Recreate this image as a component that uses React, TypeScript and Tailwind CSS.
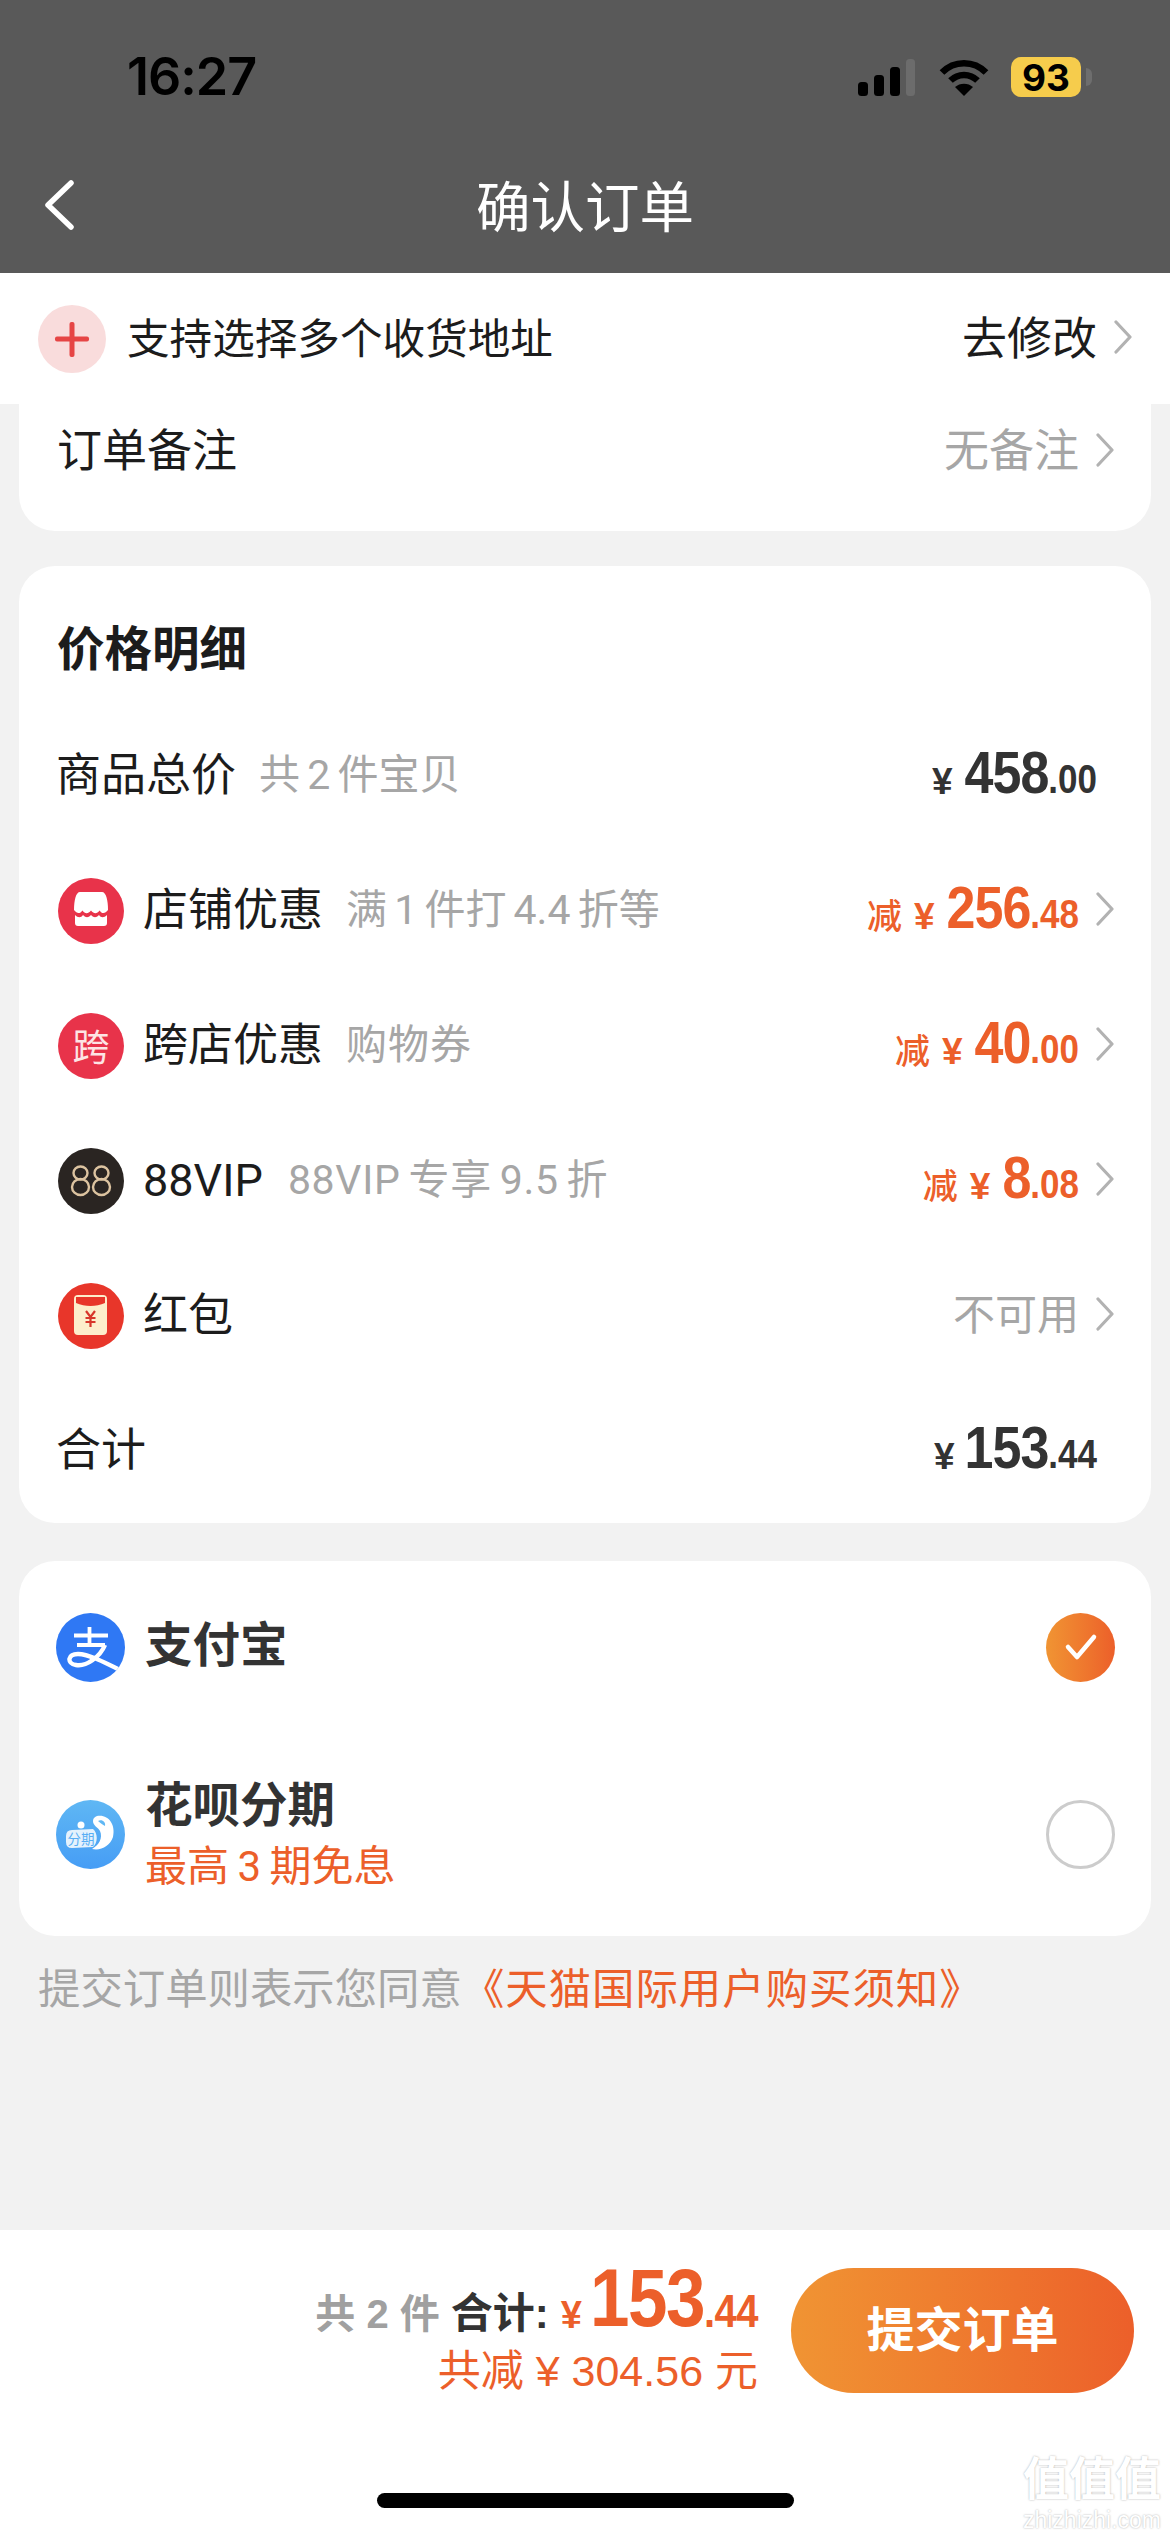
import React from "react";

const ff = "font-['Roboto','Noto_Sans_CJK_SC',sans-serif]";

function Chevron({ className = "" }: { className?: string }) {
  return (
    <svg className={className} width="20" height="34" viewBox="0 0 20 34" fill="none">
      <path d="M3 2 L17 17 L3 32" stroke="#b2b2b2" strokeWidth="3.2" strokeLinecap="round" strokeLinejoin="round" />
    </svg>
  );
}

function StoreIcon() {
  return (
    <svg width="66" height="66" viewBox="0 0 66 66">
      <circle cx="33" cy="33" r="33" fill="#e8334a" />
      <path d="M22 14 H44 C48 14 50 22 50 32 C47 36 44 36 41.5 32.5 C39 36 36 36 33 32.5 C30 36 27 36 24.5 32.5 C22 36 19 36 16 32 C16 22 18 14 22 14 Z" fill="#fff" />
      <path d="M17 37 C20 40 23 40 25 37 C28 40 30 40 33 37 C36 40 38 40 41 37 C43 40 46 40 49 37 V45 Q49 48 46 48 H20 Q17 48 17 45 Z" fill="#fff" />
    </svg>
  );
}

function KuaIcon() {
  return (
    <div className="w-[66px] h-[66px] rounded-full bg-[#e8334a] flex items-center justify-center text-[#fde4e4] text-[37px] leading-none font-['Noto_Sans_CJK_SC',sans-serif] shrink-0">
      跨
    </div>
  );
}

function VipIcon() {
  return (
    <svg width="66" height="66" viewBox="0 0 66 66">
      <circle cx="33" cy="33" r="33" fill="#2a2522" />
      <g fill="none" stroke="#dcc3a0" strokeWidth="2.4">
        <ellipse cx="22.5" cy="25" rx="7" ry="6.5" />
        <ellipse cx="22.5" cy="39" rx="8.5" ry="8" />
        <ellipse cx="43.5" cy="25" rx="7" ry="6.5" />
        <ellipse cx="43.5" cy="39" rx="8.5" ry="8" />
      </g>
    </svg>
  );
}

function PacketIcon() {
  return (
    <svg width="66" height="66" viewBox="0 0 66 66">
      <circle cx="33" cy="33" r="33" fill="#e8362a" />
      <rect x="16" y="12" width="33" height="40" rx="4" fill="#fdeecb" />
      <path d="M18 14 H47 V20 C38 24 27 24 18 20 Z" fill="#e8362a" />
      <path d="M28 28 L32.5 34 L37 28 M27.5 35 H37.5 M27.5 39 H37.5 M32.5 34 V44" stroke="#d8362a" strokeWidth="2.2" fill="none" />
    </svg>
  );
}

function AlipayIcon() {
  return (
    <svg width="69" height="69" viewBox="0 0 69 69">
      <defs>
        <clipPath id="ali">
          <circle cx="34.5" cy="34.5" r="34.5" />
        </clipPath>
      </defs>
      <circle cx="34.5" cy="34.5" r="34.5" fill="#2f78f4" />
      <g clipPath="url(#ali)" fill="none" stroke="#fff" strokeWidth="3.8">
        <path d="M18 22.5 H52 M33.5 14 V32 M21 32 H49" />
        <path d="M49 32 C44 44 30 54 20 52 C10 50 12 41 22 41 C33 41 50 50 70 60" strokeWidth="4.4" />
      </g>
    </svg>
  );
}

function HuabeiIcon() {
  return (
    <svg width="69" height="69" viewBox="0 0 69 69">
      <defs>
        <linearGradient id="hb" x1="0" y1="0" x2="0" y2="1">
          <stop offset="0" stopColor="#5fb7f4" />
          <stop offset="1" stopColor="#469df5" />
        </linearGradient>
      </defs>
      <circle cx="34.5" cy="34.5" r="34.5" fill="url(#hb)" />
      <path d="M41 16 C52 14 60 24 57 37 C54 46 45 51 36 49 C43 45 47 38 44 31 C42 27 37 26 37 21 C37 18 39 17 41 16 Z" fill="#fff" />
      <path d="M42 21 C46 19 50 22 49 26 C46 24 44 23 42 21 Z" fill="#5fb7f4" />
      <circle cx="25" cy="25" r="3.5" fill="#fff" />
      <path d="M16 30 L37 29 C42 33 42 43 37 47 L16 48 Q10 48 10 42 V36 Q10 30 16 30 Z" fill="#e4f2fd" />
      <text x="25" y="43.5" textAnchor="middle" fontSize="13.5" fill="#58aef4" fontFamily="Noto Sans CJK SC, sans-serif">分期</text>
    </svg>
  );
}

function Price({ prefix, yuan, cents, yenGap, color }: { prefix?: string; yuan: string; cents: string; yenGap?: string; color: string }) {
  return (
    <div className={`flex items-baseline font-bold font-['Liberation_Sans','Noto_Sans_CJK_SC',sans-serif] leading-none ${color}`}>
      {prefix && <span className="text-[35px] font-medium mr-[12px]">{prefix}</span>}
      <span className={`text-[37px] ${yenGap ?? "mr-[12px]"}`}>¥</span>
      <span className="inline-block origin-bottom scale-y-[1.15] text-[52px] tracking-[-1px]">{yuan}</span>
      <span className="inline-block origin-bottom scale-y-[1.15] text-[35px]">{cents}</span>
    </div>
  );
}

function Row({ icon, label, sub, subClass, right, chevron }: { icon?: React.ReactNode; label: string; sub?: string; subClass?: string; right: React.ReactNode; chevron?: boolean }) {
  return (
    <div className={`h-[135px] flex items-center pl-[39px] ${chevron ? "pr-[36px]" : "pr-[54px]"}`}>
      {icon && <div className="mr-[19px] shrink-0 flex">{icon}</div>}
      <span className={`text-[45px] leading-none text-[#1c1c1c] ${icon ? "" : "-ml-[2px]"}`}>{label}</span>
      {sub && <span className={`ml-[23px] text-[41px] leading-none text-[#a6a6a6] [word-spacing:-3px] ${subClass ?? ""}`}>{sub}</span>}
      <div className="ml-auto flex items-center">
        {right}
        {chevron && <Chevron className="ml-[16px] mb-[4px]" />}
      </div>
    </div>
  );
}

export default function App() {
  return (
    <div className={`relative w-[1170px] h-[2532px] overflow-hidden bg-[#f2f2f2] flex flex-col ${ff}`}>
      {/* Header */}
      <header className="h-[273px] bg-[#595959] shrink-0">
        <div className="pt-[50px] h-[104px] flex items-center pl-[127px] pr-[78px]">
          <span className="text-[52px] font-semibold leading-none text-black font-['Inter',sans-serif] tracking-[-1px]">16:27</span>
          <div className="ml-auto flex items-center">
            <svg width="57" height="37" viewBox="0 0 57 37" className="mr-[24px]">
              <rect x="0" y="23" width="10" height="14" rx="3.5" fill="#000" />
              <rect x="16" y="16" width="10" height="21" rx="3.5" fill="#000" />
              <rect x="32" y="8" width="10" height="29" rx="3.5" fill="#000" />
              <rect x="48" y="0" width="9" height="37" rx="3.5" fill="#6c6c6c" />
            </svg>
            <svg width="50" height="37" viewBox="0 0 50 37" className="mr-[22px]" fill="none" stroke="#000" strokeWidth="6.5">
              <path d="M3 13.5 C15 1 35 1 47 13.5" />
              <path d="M11.5 21.5 C19 14 31 14 38.5 21.5" />
              <path d="M25 37 L16 28 C21 23.5 29 23.5 34 28 Z" fill="#000" stroke="none" />
            </svg>
            <div className="w-[70px] h-[40px] rounded-[10px] bg-[#f6cc4c] flex items-center justify-center text-black text-[37px] font-bold leading-none font-['Inter',sans-serif]">
              93
            </div>
            <div className="ml-[5px] w-[6px] h-[18px] rounded-r-full bg-[#6e6e6e]" />
          </div>
        </div>
        <div className="relative mt-[51px] h-[100px] flex items-center justify-center">
          <svg width="32" height="50" viewBox="0 0 32 50" fill="none" className="absolute left-[43px] top-[25px]">
            <path d="M28 3 L5 25 L28 47" stroke="#fff" strokeWidth="5.5" strokeLinecap="round" strokeLinejoin="round" />
          </svg>
          <span className="pt-[6px] text-[54.5px] leading-none text-white">确认订单</span>
        </div>
      </header>

      {/* Address hint */}
      <div className="h-[131px] bg-white shrink-0 flex items-center pl-[38px] pr-[37px]">
        <svg width="68" height="68" viewBox="0 0 68 68" className="mr-[21px] shrink-0">
          <circle cx="34" cy="34" r="34" fill="#f9dcdc" />
          <rect x="17" y="31.5" width="34" height="5" rx="2" fill="#e64545" />
          <rect x="31.5" y="17" width="5" height="35" rx="2" fill="#e64545" />
        </svg>
        <span className="pt-[2px] text-[42.6px] leading-none text-[#1c1c1c]">支持选择多个收货地址</span>
        <div className="ml-auto flex items-center">
          <span className="pt-[2px] text-[45px] leading-none text-[#1c1c1c]">去修改</span>
          <Chevron className="ml-[16px] mb-[4px]" />
        </div>
      </div>

      {/* Content */}
      <main className="flex-1 px-[19px] min-h-0">
        <section className="bg-white rounded-b-[36px] h-[127px] pb-[35px] flex items-center pl-[38px] pr-[36px]">
          <span className="pt-[2px] text-[45px] leading-none text-[#1c1c1c]">订单备注</span>
          <div className="ml-auto flex items-center">
            <span className="pt-[2px] text-[45px] leading-none text-[#a6a6a6]">无备注</span>
            <Chevron className="ml-[16px]" />
          </div>
        </section>

        <section className="mt-[35px] bg-white rounded-[36px] pb-[5px]">
          <h2 className="pt-[52px] h-[117px] mb-[25px] pl-[38px] flex items-center text-[47.5px] leading-none font-bold text-[#1c1c1c]">价格明细</h2>
          <Row label="商品总价" sub="共 2 件宝贝" right={<Price yuan="458" cents=".00" color="text-[#333333]" />} />
          <Row icon={<StoreIcon />} label="店铺优惠" sub="满 1 件打 4.4 折等" chevron right={<Price prefix="减" yuan="256" cents=".48" color="text-[#ec5f2a]" />} />
          <Row icon={<KuaIcon />} label="跨店优惠" sub="购物券" subClass="tracking-[1px]" chevron right={<Price prefix="减" yuan="40" cents=".00" color="text-[#ec5f2a]" />} />
          <Row icon={<VipIcon />} label="88VIP" sub="88VIP 专享 9.5 折" subClass="tracking-[0.7px] !ml-[25px]" chevron right={<Price prefix="减" yuan="8" cents=".08" color="text-[#ec5f2a]" />} />
          <Row icon={<PacketIcon />} label="红包" chevron right={<span className="text-[42px] leading-none text-[#a6a6a6]">不可用</span>} />
          <Row label="合计" right={<Price yuan="153" cents=".44" yenGap="mr-[10px]" color="text-[#333333]" />} />
        </section>

        <section className="mt-[38px] bg-white rounded-[36px]">
          <div className="h-[172px] flex items-center pl-[37px] pr-[36px]">
            <AlipayIcon />
            <span className="ml-[20px] text-[47.5px] leading-none font-bold text-[#333333]">支付宝</span>
            <div className="ml-auto w-[69px] h-[69px] rounded-full bg-gradient-to-r from-[#f09433] to-[#ec5f2a] flex items-center justify-center">
              <svg width="36" height="30" viewBox="0 0 36 30" fill="none">
                <path d="M5 15 L14 25 L31 5" stroke="#fff" strokeWidth="4.5" strokeLinecap="round" strokeLinejoin="round" />
              </svg>
            </div>
          </div>
          <div className="h-[203px] flex items-center pl-[37px] pr-[36px]">
            <HuabeiIcon />
            <div className="ml-[20px] pt-[5px] flex flex-col">
              <span className="h-[60px] flex items-center text-[47.5px] leading-none font-bold text-[#333333]">花呗分期</span>
              <span className="h-[60px] flex items-center text-[42px] leading-none text-[#ec5f2a] [word-spacing:-2px]">最高 3 期免息</span>
            </div>
            <div className="ml-auto w-[69px] h-[69px] rounded-full border-[3.5px] border-[#cccccc]" />
          </div>
        </section>

        <p className="mt-[22px] h-[60px] pt-[4px] pl-[19px] flex items-center text-[42.4px] leading-none whitespace-nowrap">
          <span className="text-[#a6a6a6]">提交订单则表示您同意</span>
          <span className="text-[#ec5f2a] tracking-[1px]">《天猫国际用户购买须知》</span>
        </p>
      </main>

      {/* Bottom bar */}
      <footer className="h-[302px] bg-white shrink-0 pt-[38px]">
        <div className="h-[125px] flex items-center justify-end pr-[36px]">
          <div className="flex flex-col items-end mr-[33px]">
            <div className="flex items-baseline leading-none font-['Liberation_Sans','Noto_Sans_CJK_SC',sans-serif]">
              <span className="text-[40px] font-bold text-[#a0a0a0]">共 2 件</span>
              <span className="ml-[11px] text-[42px] font-bold text-[#333333]">合计:</span>
              <span className="ml-[12px] text-[38px] font-bold text-[#ec5f2a]">¥</span>
              <span className="ml-[8px] inline-block origin-bottom scale-y-[1.16] text-[71px] font-bold tracking-[-1.5px] text-[#ec5f2a]">153</span>
              <span className="inline-block origin-bottom scale-y-[1.15] text-[40px] font-bold tracking-[-0.5px] text-[#ec5f2a]">.44</span>
            </div>
            <div className="mt-[11px] text-[43px] leading-none text-[#ec5f2a] font-['Liberation_Sans','Noto_Sans_CJK_SC',sans-serif]">共减 ¥ 304.56 元</div>
          </div>
          <button className="w-[343px] h-[125px] rounded-full bg-gradient-to-r from-[#f09433] to-[#ec5f2a] text-white text-[48px] font-bold leading-none">
            提交订单
          </button>
        </div>
        <div className="mt-[100px] mx-auto w-[417px] h-[15px] rounded-full bg-black" />
      </footer>

      {/* Watermark */}
      <div className="absolute left-[1020px] top-[2449px] w-[144px] flex flex-col items-center text-white font-['Noto_Sans_CJK_SC',sans-serif] [text-shadow:0_0_2px_#a8a8a8]">
        <span className="text-[46px] leading-[52px] font-bold whitespace-nowrap">值值值</span>
        <span className="mt-[8px] text-[23px] leading-[22px] whitespace-nowrap font-['Liberation_Sans',sans-serif]">zhizhizhi.com</span>
      </div>
    </div>
  );
}
